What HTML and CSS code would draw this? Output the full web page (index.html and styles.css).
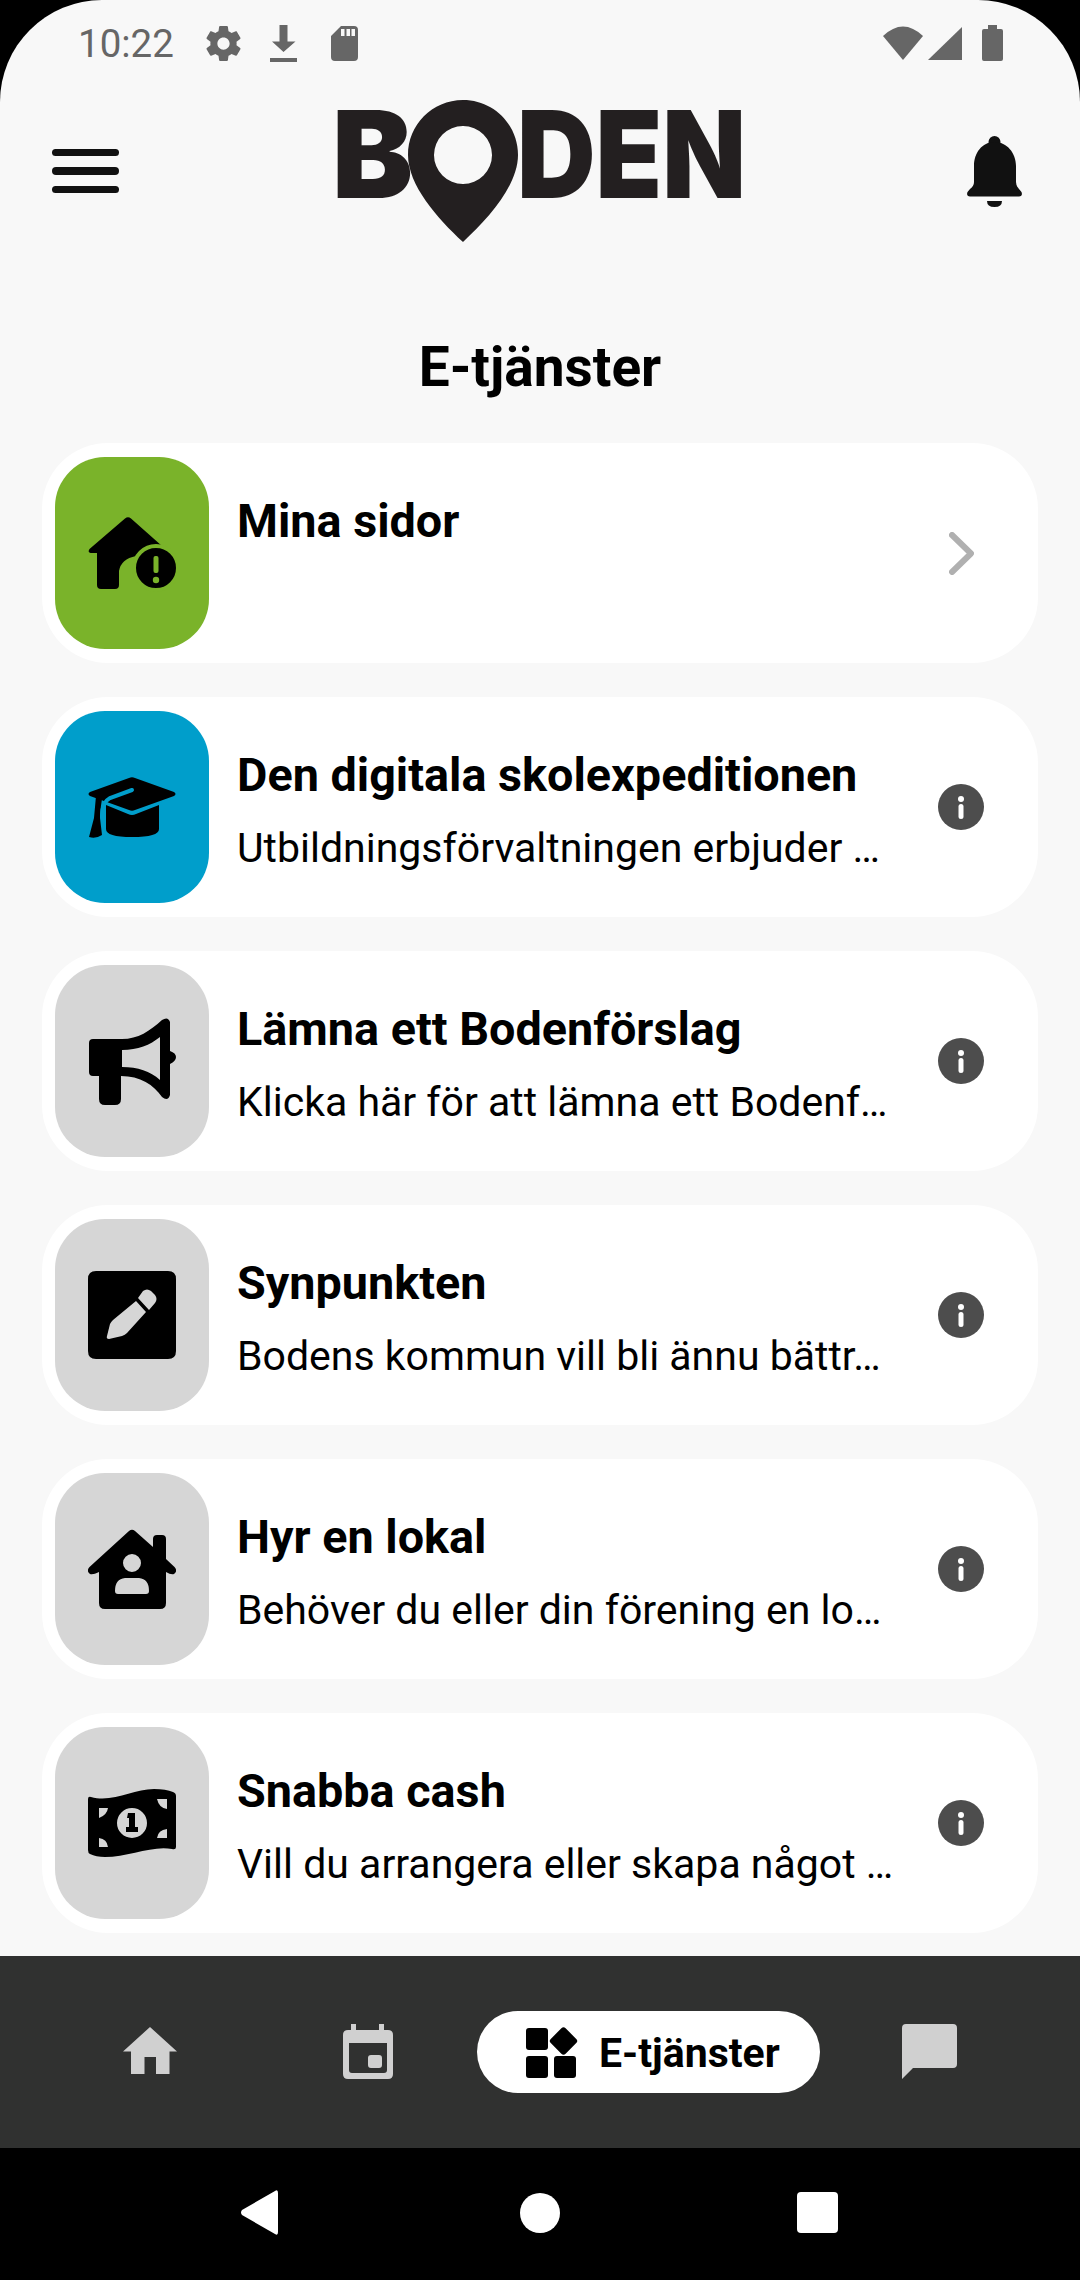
FILE: index.html
```html
<!DOCTYPE html>
<html lang="sv">
<head>
  <meta charset="UTF-8">
  <meta name="viewport" content="width=device-width, initial-scale=1.0">
  <title>Boden E-tjänster</title>
  <link rel="stylesheet" href="styles.css">
</head>
<body>

  <div class="screen">

    <div class="statusbar">
      <div class="status-left">
        <span class="time">10:22</span>
        <svg class="st-gear" viewBox="2 2 20 20"><path d="M19.43 12.98c.04-.32.07-.64.07-.98s-.03-.66-.07-.98l2.11-1.65c.19-.15.24-.42.12-.64l-2-3.46c-.12-.22-.39-.3-.61-.22l-2.49 1c-.52-.4-1.08-.73-1.69-.98l-.38-2.65C14.46 2.18 14.25 2 14 2h-4c-.25 0-.46.18-.49.42l-.38 2.65c-.61.25-1.17.59-1.69.98l-2.49-1c-.23-.09-.49 0-.61.22l-2 3.46c-.13.22-.07.49.12.64l2.11 1.65c-.04.32-.07.65-.07.98s.03.66.07.98l-2.11 1.65c-.19.15-.24.42-.12.64l2 3.46c.12.22.39.3.61.22l2.49-1c.52.4 1.08.73 1.69.98l.38 2.65c.03.24.24.42.49.42h4c.25 0 .46-.18.49-.42l.38-2.65c.61-.25 1.17-.59 1.69-.98l2.49 1c.23.09.49 0 .61-.22l2-3.46c.12-.22.07-.49-.12-.64l-2.11-1.65zM12 15.5c-1.93 0-3.5-1.57-3.5-3.5s1.57-3.5 3.5-3.5 3.5 1.57 3.5 3.5-1.57 3.5-3.5 3.5z"/></svg>
        <svg class="st-dl" viewBox="0 0 27 37"><path d="M9.5 0h8v16.5h8L13.5 27 2 16.5h7.5zM0 33h27v4H0z"/></svg>
        <svg class="st-sd" viewBox="0 0 27 35"><path fill-rule="evenodd" d="M10 0H23Q27 0 27 4V31Q27 35 23 35H4Q0 35 0 31V10ZM10 3V10H13.5V3ZM15.5 3V10H19V3ZM20.5 3V10H24V3Z"/></svg>
      </div>
      <div class="status-right">
        <svg class="st-wifi" viewBox="0 0 40 34"><path d="M0 10Q20-9 40 10L20 34Z"/></svg>
        <svg class="st-signal" viewBox="0 0 34 33"><path d="M34 0V33H0Z"/></svg>
        <svg class="st-batt" viewBox="0 0 21 36"><path d="M6 0h9v4h4q2 0 2 2v28q0 2-2 2H2q-2 0-2-2V6q0-2 2-2h4z"/></svg>
      </div>
    </div>

    <header class="topbar">
      <div class="burger"><span></span><span></span><span></span></div>
      <svg class="logo" viewBox="-40 -20 482 182">
        <text class="logo-text" x="-7" y="98" textLength="81" lengthAdjust="spacingAndGlyphs">B</text>
        <path fill-rule="evenodd" d="M124 0C155 0 179 25 179 55C179 85 150 118 124 142C98 118 69 85 69 55C69 25 93 0 124 0ZM124 26A29 29 0 1 0 124 84A29 29 0 1 0 124 26Z"/>
        <text class="logo-text" x="178" y="98" textLength="229" lengthAdjust="spacingAndGlyphs">DEN</text>
      </svg>
      <svg class="bell" viewBox="0 0 55 71"><circle cx="27.5" cy="6" r="6"/><path d="M27.5 6C40 6 49 17 49 30V46Q49 50 52 53L54.5 56Q56 60 52 60.5H3Q-1 60 .5 56L3 53Q7 50 7 46V30C7 17 15 6 27.5 6Z"/><path d="M20 65H35Q35 71 27.5 71Q20 71 20 65Z"/></svg>
    </header>

    <h1>E-tjänster</h1>

    <div class="list">

      <div class="card">
        <div class="tile green">
          <svg viewBox="0 0 88 88"><path d="M37 9.5Q40 7 43 9.5L74 37V45L48 47Q33 50 31 62V76Q31 80 27 80H13Q9 80 9 76V44H4Q-1 44 1.5 40Z"/><circle class="ring-green" cx="68" cy="59" r="22"/><rect class="cut-green" x="65.5" y="47" width="5" height="17" rx="2"/><circle class="cut-green" cx="68" cy="71" r="3.2"/></svg>
        </div>
        <div class="txt">
          <div class="name">Mina sidor</div>
        </div>
        <div class="act">
          <svg class="chev" viewBox="0 0 25 43"><polyline points="3,3 22,21.5 3,40"/></svg>
        </div>
      </div>

      <div class="card">
        <div class="tile blue">
          <svg viewBox="0 0 88 88"><path d="M41 15Q44 13.5 47 15L86 29Q89 31 86 33L47 47Q44 48.5 41 47L2 33Q-1 31 2 29Z"/><path d="M8 33L14 36Q12 48 12 55L14 72Q8 76 1 74L6 55Q7 44 8 33Z"/><path class="cut-blue" d="M44 27L22 35Q14 39 14 53"/><path d="M18 42L40 51Q44 53 48 51L71 42V66Q71 74 44 74Q18 74 18 66Z"/></svg>
        </div>
        <div class="txt">
          <div class="name">Den digitala skolexpeditionen</div>
          <div class="desc">Utbildningsförvaltningen erbjuder …</div>
        </div>
        <div class="act">
          <svg class="info" viewBox="0 0 46 46"><circle cx="23" cy="23" r="23"/><circle class="i-mark" cx="23" cy="15" r="3"/><rect class="i-mark" x="20.5" y="20" width="5" height="15" rx="2.5"/></svg>
        </div>
      </div>

      <div class="card">
        <div class="tile">
          <svg viewBox="0 0 88 88"><path fill-rule="evenodd" d="M5 22H34C50 22 62 14 74 3Q80-1 82 5V34Q88 36 88 40Q88 44 82 47V78Q80 85 74 80C66 68 52 59 33 59V82Q33 88 27 88H17Q11 88 11 82V59H5Q1 59 1 55V26Q1 22 5 22ZM34 33V50C50 50 62 54 72 63V20C62 28 50 33 34 33Z"/></svg>
        </div>
        <div class="txt">
          <div class="name">Lämna ett Bodenförslag</div>
          <div class="desc">Klicka här för att lämna ett Bodenf…</div>
        </div>
        <div class="act">
          <svg class="info" viewBox="0 0 46 46"><circle cx="23" cy="23" r="23"/><circle class="i-mark" cx="23" cy="15" r="3"/><rect class="i-mark" x="20.5" y="20" width="5" height="15" rx="2.5"/></svg>
        </div>
      </div>

      <div class="card">
        <div class="tile">
          <svg viewBox="0 0 88 88"><path fill-rule="evenodd" d="M8 0H80Q88 0 88 8V80Q88 88 80 88H8Q0 88 0 80V8Q0 0 8 0ZM48 30L58 41L39 62Q37 64 34 65L21 68Q18 68 19 65L22 53Q23 51 25 49ZM50 27L61 39L67 32Q70 28 67 24L63 20Q59 17 55 20Z"/></svg>
        </div>
        <div class="txt">
          <div class="name">Synpunkten</div>
          <div class="desc">Bodens kommun vill bli ännu bättr…</div>
        </div>
        <div class="act">
          <svg class="info" viewBox="0 0 46 46"><circle cx="23" cy="23" r="23"/><circle class="i-mark" cx="23" cy="15" r="3"/><rect class="i-mark" x="20.5" y="20" width="5" height="15" rx="2.5"/></svg>
        </div>
      </div>

      <div class="card">
        <div class="tile">
          <svg viewBox="0 0 88 88"><path fill-rule="evenodd" d="M41 6Q44 3.5 47 6L65 22V14Q65 10 69 10H74Q78 10 78 14V34L86.5 42Q90 46 86 49Q83 50 78 47V78Q78 84 72 84H17Q11 84 11 78V47Q5 50 2 49Q-2 46 1.5 42ZM44 29A9 9 0 1 0 44 47A9 9 0 1 0 44 29ZM37 53Q27 54 27 66Q27 69 30 69H58Q61 69 61 66Q61 54 51 53Z"/></svg>
        </div>
        <div class="txt">
          <div class="name">Hyr en lokal</div>
          <div class="desc">Behöver du eller din förening en lo…</div>
        </div>
        <div class="act">
          <svg class="info" viewBox="0 0 46 46"><circle cx="23" cy="23" r="23"/><circle class="i-mark" cx="23" cy="15" r="3"/><rect class="i-mark" x="20.5" y="20" width="5" height="15" rx="2.5"/></svg>
        </div>
      </div>

      <div class="card">
        <div class="tile">
          <svg viewBox="0 0 88 88"><path fill-rule="evenodd" d="M3 18C25 24 45 10 66 10Q78 10 85 13Q88 14 88 17V68Q88 71 84 70C65 66 40 78 17 78Q8 78 2 75Q0 74 0 71V20Q0 17 3 18ZM44 29A15 15 0 1 0 44 59A15 15 0 1 0 44 29ZM11 29H20Q19 36 11 39ZM69 20H79V30Q71 29 69 20ZM11 59Q19 60 20 68H11ZM79 50V59H69Q70 51 79 50ZM40 34H47V48H50V53H38V48H41V39H39Z"/></svg>
        </div>
        <div class="txt">
          <div class="name">Snabba cash</div>
          <div class="desc">Vill du arrangera eller skapa något …</div>
        </div>
        <div class="act">
          <svg class="info" viewBox="0 0 46 46"><circle cx="23" cy="23" r="23"/><circle class="i-mark" cx="23" cy="15" r="3"/><rect class="i-mark" x="20.5" y="20" width="5" height="15" rx="2.5"/></svg>
        </div>
      </div>

    </div>

    <nav class="tabbar">
      <svg class="tab-home" viewBox="0 0 54 47"><path fill-rule="evenodd" d="M27 0L54 24.5H46.500V47H33V30H21.500V47H8V24.500H0Z"/></svg>
      <svg class="tab-cal" viewBox="0 0 50 55"><path fill-rule="evenodd" d="M8 0H13V6H36V0H41V6H45Q50 6 50 11V50Q50 55 45 55H5Q0 55 0 50V11Q0 6 5 6H8ZM6 19V46Q6 49 9 49H41Q44 49 44 46V19ZM28 31H36Q39 31 39 34V41Q39 44 36 44H28Q25 44 25 41V34Q25 31 28 31Z"/></svg>
      <div class="tab-pill">
        <svg viewBox="0 0 52 52"><rect x="0" y="2" width="22" height="22" rx="3"/><rect x="0" y="30" width="22" height="22" rx="3"/><rect x="28" y="30" width="22" height="22" rx="3"/><rect x="27" y="4.500" width="21" height="21" rx="3" transform="rotate(45 37.500 15)"/></svg>
        <span>E-tjänster</span>
      </div>
      <svg class="tab-chat" viewBox="0 0 55 55"><path d="M4 0H51Q55 0 55 4V40Q55 44 51 44H11L0 55V4Q0 0 4 0Z"/></svg>
    </nav>
  </div>

  <div class="sysnav">
    <svg class="nav-back" viewBox="0 0 38 45"><path d="M35 1Q38-1 38 3V42Q38 46 35 44L2 25Q0 22.500 2 20Z"/></svg>
    <div class="nav-home"></div>
    <div class="nav-recent"></div>
  </div>

</body>
</html>
```

FILE: styles.css
```css
*{box-sizing:border-box}
body{
  margin:0;width:1080px;height:2280px;background:#000;color:#000;
  font-family:Roboto,sans-serif;display:flex;flex-direction:column;overflow:hidden;
}
svg{display:block;flex:none}

.screen{
  flex:1;min-height:0;background:#f8f8f8;display:flex;flex-direction:column;
  border-radius:102px 102px 0 0;overflow:hidden;
}

/* status bar */
.statusbar{
  height:86px;margin-bottom:14px;padding:0 77px 0 78px;flex:none;
  display:flex;justify-content:space-between;align-items:center;
}
.statusbar svg{fill:#666}
.status-left{display:flex;align-items:center;gap:29px}
.status-right{display:flex;align-items:center}
.time{font-size:38.500px;color:#666;margin-right:3px}
.st-gear{width:35px;height:35px}
.st-dl{width:27px;height:37px}
.st-sd{width:27px;height:35px;margin-left:5px}
.st-wifi{width:40px;height:34px}
.st-signal{width:34px;height:33px;margin-left:5px}
.st-batt{width:21px;height:36px;margin-left:20px}

/* header */
.topbar{
  height:142px;flex:none;padding:0 52px;
  display:grid;grid-template-columns:1fr auto 1fr;align-items:center;
}
.burger{display:flex;flex-direction:column;gap:11px;width:67px}
.burger span{height:7.500px;background:#111;border-radius:4px}
.logo{width:482px;height:182px;margin:-20px 0;fill:#231f20}
.logo-text{font-family:Inter,sans-serif;font-weight:900;font-size:121px}
.bell{width:55px;height:71px;fill:#111;justify-self:end;margin-right:6px}

h1{
  margin:95px 0 46px;font-size:55px;line-height:60px;font-weight:700;
  text-align:center;flex:none;
}

/* list */
.list{flex:1;min-height:0;padding:0 42px;display:flex;flex-direction:column;gap:34px}
.card{
  height:220px;flex:none;background:#fff;border-radius:66px;padding:14px 0 14px 13px;
  display:flex;align-items:center;
}
.tile{
  width:154px;height:192px;flex:none;background:#d6d6d6;border-radius:50px;
  display:flex;align-items:center;justify-content:center;
}
.tile svg{width:88px;height:88px}
.green{background:#7ab32a}
.blue{background:#009ecb}
.ring-green{stroke:#7ab32a;stroke-width:4;fill:#000}
.cut-green{fill:#7ab32a}
.cut-blue{stroke:#009ecb;stroke-width:4;fill:none;stroke-linecap:round}

.txt{flex:1;min-width:0;align-self:flex-start;padding:36px 0 0 28px;white-space:nowrap}
.name{font-size:46.750px;line-height:56px;font-weight:700}
.desc{font-size:41px;line-height:52px;margin-top:19px}

.act{width:100px;flex:none;display:flex;justify-content:center;margin-right:27px}
.chev{width:25px;height:43px;fill:none;stroke:#b0b0b0;stroke-width:6;stroke-linecap:round;stroke-linejoin:round}
.info{width:46px;height:46px;fill:#4d4d4d}
.i-mark{fill:#fff}

/* bottom tabs */
.tabbar{
  height:192px;flex:none;background:#303130;
  display:flex;align-items:center;padding-left:123px;
}
.tabbar>svg{fill:#d0d0d0}
.tab-home{width:54px;height:47px;margin-top:-3px}
.tab-cal{width:50px;height:55px;margin:-1px 0 0 166px}
.tab-pill{
  height:82px;width:343px;flex:none;background:#fff;border-radius:41px;margin-left:84px;
  display:flex;align-items:center;padding-left:49px;gap:21px;
}
.tab-pill svg{width:52px;height:52px}
.tab-pill span{font-size:41px;font-weight:700;margin-top:2px}
.tab-chat{width:55px;height:55px;margin:-1px 0 0 82px}

/* android nav */
.sysnav{height:132px;flex:none;background:#000;display:flex;align-items:center;padding-left:240px;padding-bottom:3px}
.nav-back{width:38px;height:45px;fill:#fff}
.nav-home{width:40px;height:40px;border-radius:50%;background:#fff;margin-left:242px}
.nav-recent{width:41px;height:41px;border-radius:4px;background:#fff;margin-left:237px}
```
